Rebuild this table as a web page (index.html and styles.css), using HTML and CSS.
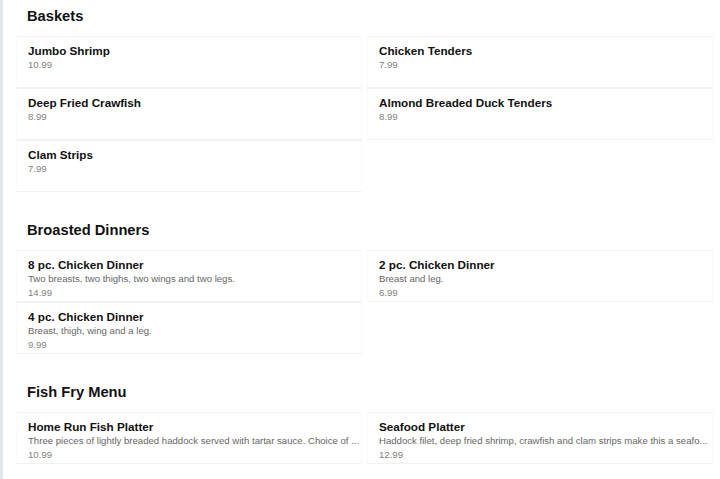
FILE: index.html
```html
<!DOCTYPE html>
<html>
<head>
<meta charset="utf-8">
<link rel="stylesheet" href="styles.css">
</head>
<body>
<div class="page">
  <section class="section">
    <h2 class="section-title">Baskets</h2>
    <div class="grid">
      <div class="card"><div class="name">Jumbo Shrimp</div><div class="price">10.99</div></div>
      <div class="card"><div class="name">Chicken Tenders</div><div class="price">7.99</div></div>
      <div class="card"><div class="name">Deep Fried Crawfish</div><div class="price">8.99</div></div>
      <div class="card"><div class="name">Almond Breaded Duck Tenders</div><div class="price">8.99</div></div>
      <div class="card"><div class="name">Clam Strips</div><div class="price">7.99</div></div>
    </div>
  </section>
  <section class="section">
    <h2 class="section-title">Broasted Dinners</h2>
    <div class="grid">
      <div class="card"><div class="name">8 pc. Chicken Dinner</div><div class="desc">Two breasts, two thighs, two wings and two legs.</div><div class="price">14.99</div></div>
      <div class="card"><div class="name">2 pc. Chicken Dinner</div><div class="desc">Breast and leg.</div><div class="price">6.99</div></div>
      <div class="card"><div class="name">4 pc. Chicken Dinner</div><div class="desc">Breast, thigh, wing and a leg.</div><div class="price">9.99</div></div>
    </div>
  </section>
  <section class="section">
    <h2 class="section-title">Fish Fry Menu</h2>
    <div class="grid">
      <div class="card"><div class="name">Home Run Fish Platter</div><div class="desc">Three pieces of lightly breaded haddock served with tartar sauce. Choice of ...</div><div class="price">10.99</div></div>
      <div class="card"><div class="name">Seafood Platter</div><div class="desc">Haddock filet, deep fried shrimp, crawfish and clam strips make this a seafo...</div><div class="price">12.99</div></div>
    </div>
  </section>
</div>
</body>
</html>
```

FILE: styles.css
```css
html, body {
  margin: 0;
  padding: 0;
  background: #fff;
}
body {
  font-family: "Liberation Sans", Arial, sans-serif;
  color: #111;
}
.page {
  border-left: 3px solid #dde7eb;
  padding: 0 0 0 13px;
  min-height: 479px;
  box-sizing: border-box;
}
.section {
  padding-top: 6px;
  margin-bottom: 22px;
}
.section-title {
  margin: 0 0 10px 0;
  padding-left: 11px;
  font-size: 14.7px;
  line-height: 20px;
  font-weight: bold;
  color: #111;
}
.grid {
  display: grid;
  grid-template-columns: 346px 346px;
  column-gap: 5px;
}
.card {
  box-sizing: border-box;
  height: 52px;
  padding: 6px 11px 0 11px;
  border-top: 1px solid #f1f1f1;
  border-bottom: 1px solid #f1f1f1;
  border-left: 1px solid #fafafa;
  border-right: 1px solid #fafafa;
}
.name {
  font-size: 11.7px;
  line-height: 15px;
  font-weight: bold;
  color: #111;
}
.desc {
  font-size: 9.6px;
  line-height: 14px;
  color: #666;
  white-space: nowrap;
}
.price {
  font-size: 9.6px;
  line-height: 14px;
  color: #808080;
}
```
